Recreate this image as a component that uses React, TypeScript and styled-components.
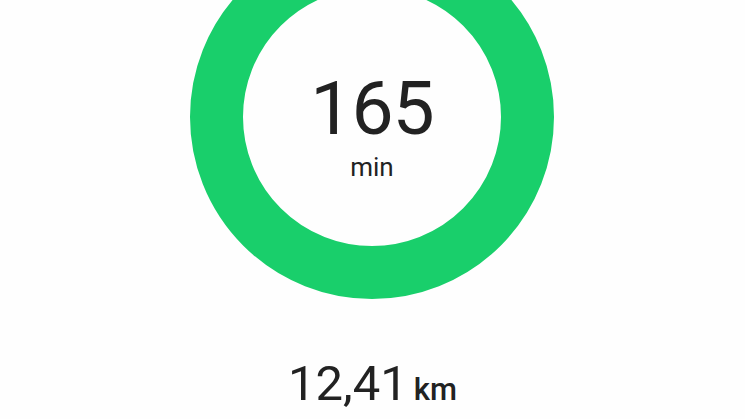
import React, { FC } from 'react'
import styled, { createGlobalStyle } from 'styled-components'

const GlobalStyle = createGlobalStyle`
  html, body {
    margin: 0;
    padding: 0;
    background: #fefefe;
    overflow: hidden;
  }
  body {
    font-family: Roboto, "Noto Sans", "Liberation Sans", sans-serif;
    color: #222222;
  }
`

const App: FC = () => {
  return (
    <Main>
      <GlobalStyle />
      <Ring>
        <Value>165</Value>
        <Unit>min</Unit>
      </Ring>
      <Distance>
        <DistanceValue>12,41</DistanceValue>
        <DistanceUnit>km</DistanceUnit>
      </Distance>
    </Main>
  )
}

export default App

const Main = styled.div`
  width: 745px;
  height: 419px;
  display: flex;
  flex-direction: column;
  align-items: center;
  overflow: hidden;
`

const Ring = styled.div`
  margin-top: -65px;
  margin-left: -1px;
  width: 364px;
  height: 364px;
  flex-shrink: 0;
  box-sizing: border-box;
  border: 53px solid #19cf6b;
  border-radius: 50%;
  display: flex;
  flex-direction: column;
  align-items: center;
  justify-content: center;
  padding-top: 18px;
`

const Value = styled.div`
  font-size: 75px;
  line-height: 75px;
  font-weight: 400;
  letter-spacing: -1px;
`

const Unit = styled.div`
  font-size: 26px;
  line-height: 30px;
  font-weight: 400;
  margin-top: 6px;
`

const Distance = styled.div`
  margin-top: 57px;
  display: flex;
  align-items: baseline;
  gap: 6px;
`

const DistanceValue = styled.span`
  font-size: 49px;
  line-height: 56px;
  font-weight: 400;
`

const DistanceUnit = styled.span`
  font-size: 31px;
  font-weight: 500;
`
